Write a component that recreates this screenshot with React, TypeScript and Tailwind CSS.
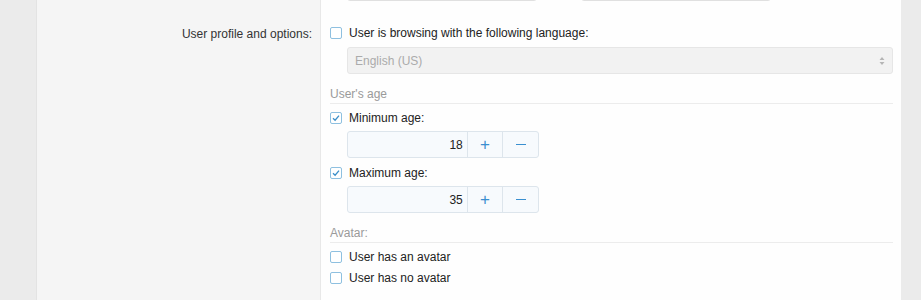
import React from 'react';

const Check: React.FC<{ checked?: boolean }> = ({ checked }) => (
  <span className="w-[12px] h-[12px] border border-[#8ec0e0] rounded-[2px] bg-white flex items-center justify-center shrink-0">
    {checked && (
      <svg width="8" height="8" viewBox="0 0 8 8">
        <path d="M1 4.2 L3.1 6.2 L7 1.6" fill="none" stroke="#3b8fc9" strokeWidth="1.3" />
      </svg>
    )}
  </span>
);

const CheckRow: React.FC<{ label: string; checked?: boolean; className?: string }> = ({ label, checked, className }) => (
  <label className={`flex items-center gap-[7px] h-[20px] text-[#222] ${className ?? ''}`}>
    <Check checked={checked} />
    <span>{label}</span>
  </label>
);

const Spinner: React.FC<{ value: string }> = ({ value }) => (
  <div className="ml-[17px] flex w-[192px] h-[27px] border border-[#dde5ec] rounded-[3px] bg-[#f7fafd] text-[#222]">
    <div className="w-[120px] flex items-center justify-end pr-[4px]">{value}</div>
    <div className="w-[36px] border-l border-[#dde5ec] flex items-center justify-center text-[#3a8fd0] text-[17px]">+</div>
    <div className="w-[36px] border-l border-[#dde5ec] flex items-center justify-center">
      <span className="w-[10px] h-[1.5px] bg-[#3a8fd0]" />
    </div>
  </div>
);

const Heading: React.FC<{ text: string; className?: string }> = ({ text, className }) => (
  <div className={`text-[#9a9a9a] h-[19px] flex items-center border-b border-[#ececec] ${className ?? ''}`}>{text}</div>
);

export default function App() {
  return (
    <div className="w-[921px] h-[300px] overflow-hidden bg-[#ebebeb] flex text-[12px] font-['Liberation_Sans',Arial,sans-serif]">
      <div className="w-[37px] shrink-0 border-r border-[#e3e3e3]" />
      <div className="w-[284px] shrink-0 bg-[#f5f5f5] border-r border-[#e8e8e8] pr-[8px] pt-[25px] text-right text-[#333]">
        User profile and options:
      </div>
      <div className="w-[580px] shrink-0 bg-[#fefefe] pl-[9px] pr-[8px]">
        <div className="flex -mt-[26px] h-[28px]">
          <div className="ml-[17px] w-[190px] h-[27px] border border-[#e0e0e0] rounded-[3px] bg-white" />
          <div className="ml-[44px] w-[190px] h-[27px] border border-[#e0e0e0] rounded-[3px] bg-white" />
        </div>
        <CheckRow label="User is browsing with the following language:" className="mt-[21px]" />
        <div className="ml-[17px] mt-[4px] h-[27px] border border-[#e6e6e6] rounded-[3px] bg-[#f2f2f2] flex items-center justify-between px-[7px] text-[#ababab]">
          <span>English (US)</span>
          <svg width="6" height="10" viewBox="0 0 6 10">
            <path d="M3 1 L5.5 4 L0.5 4 Z M3 9 L5.5 6 L0.5 6 Z" fill="#b5b5b5" />
          </svg>
        </div>
        <Heading text="User's age" className="mt-[11px]" />
        <CheckRow label="Minimum age:" checked className="mt-[4px]" />
        <div className="mt-[3px]"><Spinner value="18" /></div>
        <CheckRow label="Maximum age:" checked className="mt-[5px]" />
        <div className="mt-[3px]"><Spinner value="35" /></div>
        <Heading text="Avatar:" className="mt-[11px]" />
        <CheckRow label="User has an avatar" className="mt-[4px]" />
        <CheckRow label="User has no avatar" className="mt-[1px]" />
        <div className="mt-[9px] text-[#c8c8c8] h-[19px]">Minimum number</div>
      </div>
      <div className="flex-1" />
    </div>
  );
}
